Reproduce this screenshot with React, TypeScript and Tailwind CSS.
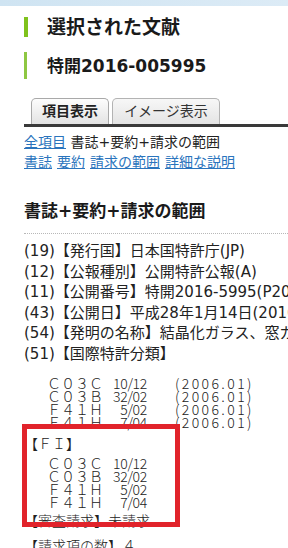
import React from 'react';

const body = "font-['DejaVu_Sans','Noto_Sans_CJK_JP',sans-serif]";
const goth = "font-['Noto_Sans_CJK_JP',sans-serif] font-light";

const bibLines = [
  '(19)【発行国】日本国特許庁(JP)',
  '(12)【公報種別】公開特許公報(A)',
  '(11)【公開番号】特開2016-5995(P2016-5995A)',
  '(43)【公開日】平成28年1月14日(2016.1.14)',
  '(54)【発明の名称】結晶化ガラス、窓ガラス及び防弾窓',
  '(51)【国際特許分類】',
];

const ipc = [
  { code: 'Ｃ０３Ｃ', num: '10/12' },
  { code: 'Ｃ０３Ｂ', num: '32/02' },
  { code: 'Ｆ４１Ｈ', num: '5/02' },
  { code: 'Ｆ４１Ｈ', num: '7/04' },
];

function CodeLine({ code, num, date }: { code: string; num: string; date?: string }) {
  return (
    <div className={`flex h-[13px] items-center whitespace-nowrap pl-[23px] text-[14px] leading-[13px] text-[#222] ${goth}`}>
      <span className="w-[56px]">{code}</span>
      <span className="w-[44px] text-right tracking-[-0.3px]">{num}</span>
      {date && <span className="ml-[28px] tracking-[2.4px]">{date}</span>}
    </div>
  );
}

export default function App() {
  return (
    <div className={`relative w-[288px] h-[548px] overflow-hidden bg-white text-[#1a1a1a] ${body}`}>
      {/* top strip */}
      <div className="h-[6px] bg-linear-to-r from-[#cfe4f2] to-[#dcebf6]" />

      <div className="pl-[24px]">
        {/* headings */}
        <div className="mt-[11px] flex h-[20px] items-center">
          <span className="h-[20px] w-[4px] bg-[#7fc21c]" />
          <span className="ml-[19px] whitespace-nowrap text-[19px] font-bold leading-[20px]">選択された文献</span>
        </div>
        <div className="mt-[15px] flex h-[27px] items-center">
          <span className="h-[27px] w-[3px] bg-[#8ec742]" />
          <span className="ml-[20px] whitespace-nowrap text-[17px] font-bold leading-[20px]">特開2016-005995</span>
        </div>

        {/* tabs */}
        <div className="mt-[19px] flex gap-[3px] border-b-[3px] border-[#3a3a3a] pl-[7px]">
          <div className="h-[26px] w-[78px] rounded-t-[5px] border border-b-0 border-[#a9a9a9] bg-linear-to-b from-[#fdfdfd] to-[#e3e3e3] text-center text-[14px] font-bold leading-[25px] text-[#222]">
            項目表示
          </div>
          <div className="h-[26px] w-[108px] rounded-t-[5px] border border-b-0 border-[#b3b3b3] bg-linear-to-b from-[#f7f7f7] to-[#e4e4e4] text-center text-[14px] leading-[25px] text-[#333]">
            イメージ表示
          </div>
        </div>

        {/* links */}
        <div className="mt-[5px] h-[20px] whitespace-nowrap text-[14px] leading-[20px] text-[#222]">
          <a className="text-[#2a74bd] underline">全項目</a> 書誌+要約+請求の範囲
        </div>
        <div className="flex h-[20px] gap-[5px] whitespace-nowrap text-[14px] leading-[20px] text-[#2a74bd]">
          <a className="underline">書誌</a>
          <a className="underline">要約</a>
          <a className="underline">請求の範囲</a>
          <a className="underline">詳細な説明</a>
        </div>

        {/* section */}
        <div className="mt-[27px] h-[24px] whitespace-nowrap text-[17px] font-bold leading-[24px]">書誌+要約+請求の範囲</div>
        <div className="mt-[10px] border-t border-dotted border-[#b8b8b8]" />

        <div className="mt-[7px] text-[15px] leading-[20.5px] text-[#222]">
          {bibLines.map(l => (
            <div key={l} className="h-[20.5px] whitespace-nowrap">{l}</div>
          ))}
        </div>

        <div className="mt-[13px]">
          {ipc.map((c, i) => (
            <CodeLine key={i} code={c.code} num={c.num} date="(2006.01)" />
          ))}
        </div>

        <div className={`mt-[4px] h-[20px] text-[14px] leading-[20px] text-[#222] ${goth}`}>【ＦＩ】</div>
        <div className="mt-[4px]">
          {ipc.map((c, i) => (
            <CodeLine key={i} code={c.code} num={c.num} />
          ))}
        </div>
        <div className={`mt-[1px] h-[20px] whitespace-nowrap text-[14px] leading-[20px] text-[#222] ${goth}`}>【審査請求】未請求</div>
        <div className={`mt-[5px] h-[20px] whitespace-nowrap text-[14px] leading-[20px] text-[#222] ${goth}`}>【請求項の数】４</div>
      </div>

      {/* annotation box */}
      <div className="absolute left-[22px] top-[424px] h-[103px] w-[158px] border-[5px] border-[#e1232b]" />
    </div>
  );
}
